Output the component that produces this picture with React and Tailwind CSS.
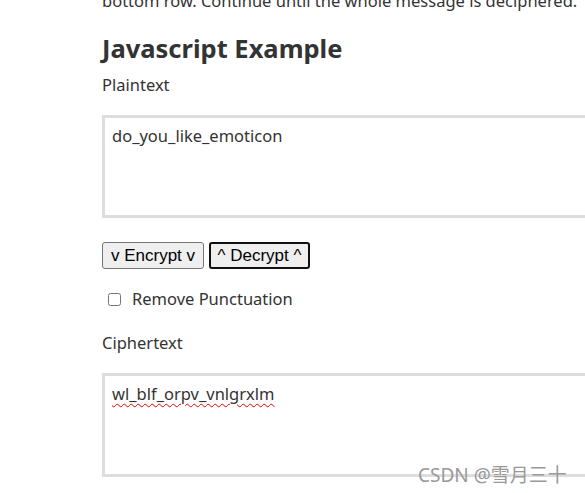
import React, { useState } from 'react';

const App = () => {
  const [plain, setPlain] = useState('do_you_like_emoticon');
  const [cipher, setCipher] = useState('wl_blf_orpv_vnlgrxlm');
  const [strip, setStrip] = useState(false);

  return (
    <div className="w-[585px] h-[493px] overflow-hidden bg-white relative">
      <div className="pl-[102px] w-[700px] text-[#333] font-['Noto_Sans',sans-serif]">
        <p className="text-[16.5px] leading-[24px] mt-[-11px] whitespace-nowrap">
          bottom row. Continue until the whole message is deciphered.
        </p>
        <h2 className="text-[25.5px] font-bold leading-[30px] mt-[20px]">Javascript Example</h2>
        <div className="text-[16.5px] leading-[20px] mt-[12px]">Plaintext</div>
        <textarea
          value={plain}
          onChange={(e) => setPlain(e.target.value)}
          className="block mt-[20px] w-[520px] h-[103px] border-[3px] border-[#ddd] px-[7px] pt-[7px] pb-[6px] text-[16.5px] leading-[22px] text-[#333] resize-none outline-none font-['Noto_Sans',sans-serif]"
        />
        <div className="flex gap-[5px] mt-[24px] font-['Liberation_Sans',Arial,sans-serif] text-[17px] text-black">
          <button className="w-[102px] h-[27px] bg-[#efefef] border border-[#767676] rounded-[3px] leading-none">
            v Encrypt v
          </button>
          <button className="w-[101px] h-[27px] bg-[#efefef] border-2 border-[#101010] rounded-[3px] leading-none">
            ^ Decrypt ^
          </button>
        </div>
        <label className="flex items-center mt-[20px] ml-[6px] text-[16.5px] leading-[20px]">
          <input
            type="checkbox"
            checked={strip}
            onChange={(e) => setStrip(e.target.checked)}
            className="w-[13px] h-[13px] m-0"
          />
          <span className="ml-[11px]">Remove Punctuation</span>
        </label>
        <div className="text-[16.5px] leading-[20px] mt-[24px]">Ciphertext</div>
        <textarea
          value={cipher}
          onChange={(e) => setCipher(e.target.value)}
          spellCheck={false}
          className="block mt-[20px] w-[520px] h-[104px] border-[3px] border-[#ddd] px-[7px] pt-[7px] pb-[6px] text-[16.5px] leading-[22px] text-[#333] resize-none outline-none underline decoration-wavy decoration-[#e00] decoration-1 underline-offset-[3px] font-['Noto_Sans',sans-serif]"
        />
      </div>
      <div className="absolute left-[418px] top-[462px] text-[19px] leading-[26px] text-[#999] font-['Noto_Sans','Noto_Sans_CJK_SC',sans-serif]">
        CSDN @雪月三十
      </div>
    </div>
  );
};

export default App;
